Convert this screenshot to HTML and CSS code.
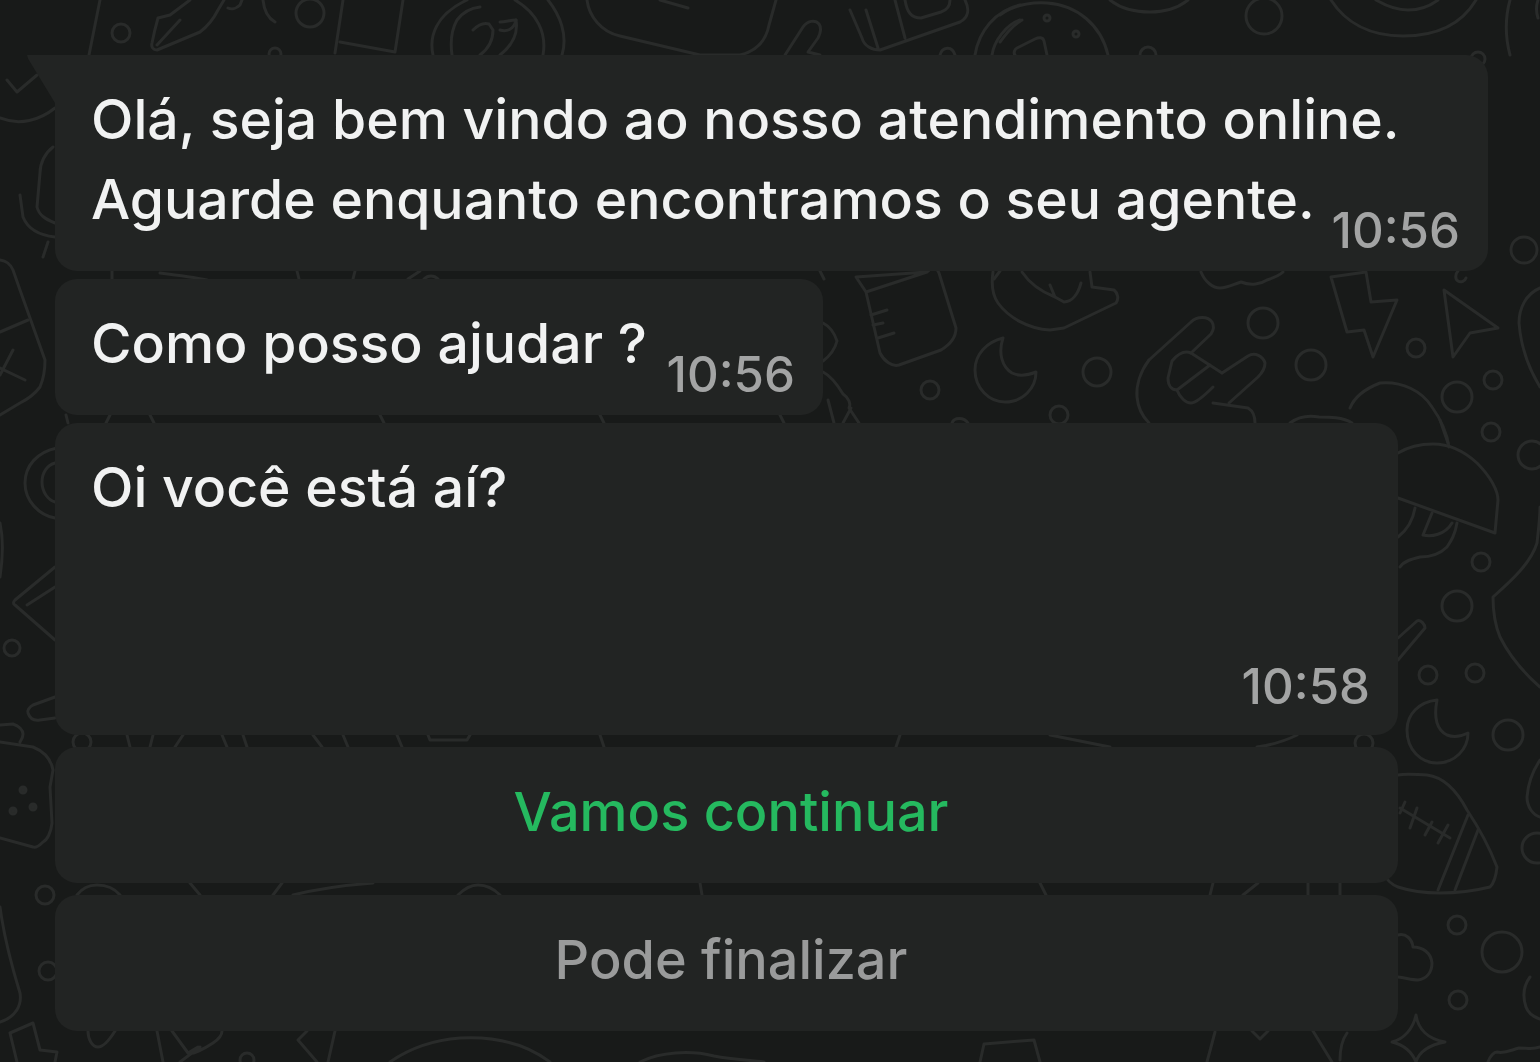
FILE: index.html
```html
<!DOCTYPE html>
<html lang="pt-BR">
<head>
    <meta charset="UTF-8">
    <title>Atendimento</title>
    <link rel="stylesheet" href="styles.css">
</head>
<body>
    <svg class="doodles" width="1540" height="1062" viewBox="0 0 1540 1062" fill="none">
        <!-- top row -->
        <circle cx="121" cy="33" r="9"/>
        <path d="M157 50c-4 0-6-3-5-7 2-10 4-18 6-25l12-3 20-15M157 50l43-18c8-6 14-14 18-22l6-10M157 45l23-25"/>
        <path d="M228 8c4 2 9 0 12-3l2-5M263 0c1 10 5 18 12 22"/>
        <circle cx="310" cy="13" r="14"/>
        <circle cx="275" cy="54" r="6"/>
        <path d="M100 0l-11 55M343 0l-8 53M340 42l55 10M403 0l-8 52"/>
        <path d="M433 55c-4-18 2-40 34-55M452 55c-2-14 0-26 5-35 6-8 14-12 23-13M480 55c8-6 13-14 13-25M493 30l-4-6c-6-2-12 2-16 6M500 30c6 2 14 0 16-10"/>
        <path d="M543 55c4-22-6-42-28-55M562 55c6-20-2-40-14-55"/>
        <path d="M500 22c6 0 10-2 16-2 2 12-2 24-16 35"/>
        <path d="M587 0c2 16 14 32 33 36l80 19h40c16-4 26-14 29-30l7-25M660 0l28 8"/>
        <path d="M785 55l18-28c4-6 12-8 16-3 3 4 1 10-1 14l-10 14 12 3"/>
        <path d="M850 10l12 28c2 8 10 12 18 12l80-28c8-4 10-12 5-22M866 10l12 38M895 0l10 38M905 0c2 12 6 18 16 18l20-6c6-2 9-6 9-12"/>
        <path d="M940 55c2-8 12-10 15 0"/>
        <path d="M975 55c4-24 20-44 45-50M992 55c2-14 14-30 28-35"/>
        <path d="M1000 15c14-10 30-13 47-12 30 2 54 22 61 52M1000 42c6-8 12-16 22-22"/>
        <circle cx="1047" cy="18" r="3"/>
        <circle cx="1076" cy="34" r="3"/>
        <path d="M1015 55c-2-2 0-6 2-7l18-9c4-2 8-2 9 2l3 14"/>
        <circle cx="1148" cy="55" r="8"/>
        <path d="M1110 0c10 8 24 12 40 12 16 0 28-4 38-12"/>
        <circle cx="1264" cy="16" r="18"/>
        <path d="M1331 0c14 22 38 36 72 36 36 0 60-14 73-36M1376 0c12 7 24 10 32 10 12 0 22-4 30-10"/>
        <path d="M1510 0c-5 18-5 36 0 55M1538 0c-2 6-2 12 0 18"/>
        <circle cx="1478" cy="59" r="7"/>

        <!-- left column -->
        <path d="M7 80l10 12 20-17M0 118c20 8 40 2 55-10"/>
        <path d="M53 147c-8 6-13 16-13 26l-3 34c2 8 8 12 18 16M20 195l3 22c4 10 14 18 32 20M48 242l-5 15"/>
        <path d="M0 260c6 1 10 3 13 10l7 20 25 70c0 12-2 20-5 27-6 8-12 12-20 16l-20 12"/>
        <path d="M0 332l28-12M13 350l-13 25M0 368l25 12"/>
        <path d="M57 448c-20 4-32 18-32 35 0 18 14 32 30 35M55 463c-8 2-13 10-13 19 0 10 6 18 13 20"/>
        <path d="M0 523c3 14 3 34 0 54"/>
        <path d="M55 567l-40 33c-2 2-2 4 0 5l40 35M27 605l28-18"/>
        <circle cx="12" cy="648" r="8"/>
        <path d="M55 697l-22 8c-4 2-6 6-5 8 2 6 6 8 12 7l15-2"/>
        <path d="M0 725l13-1c6 2 10 6 10 10 0 4-2 6-3 8M0 742l33 5c10 4 18 12 20 23l-3 17 2 36c-1 10-5 17-9 19-4 4-8 6-10 5l-33-9"/>
        <circle class="dot" cx="23" cy="790" r="3"/>
        <circle class="dot" cx="33" cy="807" r="3"/>
        <circle class="dot" cx="13" cy="811" r="3"/>
        <circle cx="45" cy="895" r="9"/>
        <circle cx="48" cy="971" r="9"/>
        <path d="M0 907c4 30 12 60 20 86 2 12-4 24-20 29"/>
        <path d="M10 1033l23-10 7 27 17 2-2 10M10 1033l7 29"/>

        <!-- bottom row -->
        <path d="M88 1031c0 8 4 16 10 16 6 0 12-8 17-16M157 1031l6 31M172 1031l16 22c4 2 16-4 25-10 6-4 9-8 9-12M200 1047l-20 15M188 1053l10-6"/>
        <path d="M307 1031l-9 9 19 22M335 1031l-7 31"/>
        <circle cx="247" cy="1060" r="7"/>
        <path d="M390 1062c20-14 44-22 70-24 36-2 66 6 90 24"/>
        <path d="M640 1062c20-10 50-12 74-6 20 4 36 4 50 6M980 1062l4-18 50-4 6 22"/>
        <path d="M1207 1062l8-30M1252 1031l8 8 8-8M1313 1031l19 31M1340 1060c0-12 2-20 7-27"/>
        <path d="M1416 1015c2 14 12 24 29 27-16 3-26 10-29 20-4-10-12-17-24-20 12-3 21-13 24-27z"/>
        <path d="M1488 1062c2-6 6-10 9-10 8 2 14-2 22-4 8 0 14 2 21-1M1530 977c-6 8-8 18-4 30 2 6 8 10 14 12"/>
        <circle cx="1458" cy="1000" r="9"/>

        <!-- between the bottle and the right edge -->
        <path d="M823 323c8 4 12 12 14 18-2 8-6 14-14 20M823 372c8 4 14 12 20 22 6 4 8 10 6 14l10 15M851 408l-8 15M828 400l6 23"/>
        <path d="M856 277l10 15 14 61c4 8 12 14 19 12l42-15c10-6 15-13 15-22l-17-55c-2-5-6-7-12-1l-61 20M856 277l71-5"/>
        <path d="M871 315l16-5M873 325l10-2M878 338l16-5"/>
        <path d="M993 272c-2 14 0 24 5 31 10 14 30 26 52 27l14-2 52-25c3-4 2-10-2-13l-22-3-2-15"/>
        <path d="M1022 272c8 12 20 20 33 25l9 5c8 0 14-8 17-19M1050 285l5 12"/>
        <path d="M1003 338c-16 4-28 16-28 32 0 18 14 32 30 32 18 0 31-14 31-30-10 4-18 4-24 1-10-6-14-20-9-35z"/>
        <circle cx="1097" cy="372" r="14"/>
        <circle cx="930" cy="390" r="9"/>
        <circle cx="1059" cy="415" r="9"/>
        <path d="M952 423c2-6 12-6 16 0"/>
        <!-- rock hand -->
        <path d="M1149 360L1191 322C1197 316 1208 316 1212 322C1215 327 1213 331 1211 334L1191 353"/>
        <path d="M1191 353C1184 350 1177 355 1172 361L1168 378C1168 386 1172 390 1177 390L1210 365M1191 353L1222 373"/>
        <path d="M1177 390C1180 398 1186 403 1191 403C1196 403 1203 397 1213 387"/>
        <path d="M1222 373L1248 356C1255 352 1263 356 1265 363C1265 368 1262 373 1258 377L1229 403"/>
        <path d="M1213 403L1248 408C1253 411 1255 416 1255 423M1149 360C1140 372 1136 386 1137 397C1138 408 1142 416 1149 423"/>
        <circle cx="1263" cy="323" r="15"/>
        <circle cx="1311" cy="365" r="15"/>
        <path d="M1201 272c4 10 12 16 19 16 8 0 14-4 21-6 10 4 20 2 26-2 6-2 12-4 16-8"/>
        <path d="M1331 277l35-5 5 30 26-2-24 57-9-27-17 2z"/>
        <path d="M1444 290l54 38-28 5-17 24z"/>
        <circle cx="1416" cy="348" r="9"/>
        <path d="M1458 271c-3 3-3 8 0 10 3 2 7 0 8-3"/>
        <circle cx="1524" cy="250" r="13"/>
        <path d="M1540 288c-14 6-21 20-21 35 2 26 10 46 21 64"/>
        <circle cx="1493" cy="380" r="9"/>
        <circle cx="1457" cy="397" r="15"/>
        <circle cx="1491" cy="432" r="9"/>
        <circle cx="1532" cy="455" r="14"/>
        <path d="M1290 423c8-6 18-8 29-6 10 0 24 0 33 6M1350 408c4-10 12-18 30-25 22-2 42 8 52 24 10 14 15 26 17 40"/>
        <!-- mushroom -->
        <path d="M1398 453c10-6 22-9 35-9 16 0 32 8 44 19 14 14 21 28 21 37l-3 33-97-35"/>
        <path d="M1415 508c-2 12-8 22-17 29M1432 513l-9 22c8 2 22 0 29-12M1457 523c-2 12-6 18-10 24-6 6-16 10-27 10-8 2-16 4-20 10M1440 420l8 23"/>
        <circle cx="1481" cy="562" r="9"/>
        <circle cx="1457" cy="606" r="15"/>
        <path d="M1540 507c0 12-2 26-3 36-6 20-26 38-44 54 0 14 2 28 7 40 10 20 24 36 40 50"/>
        <path d="M1398 638l19-17c4-2 8 4 8 7l-27 32"/>
        <circle cx="1428" cy="675" r="9"/>
        <circle cx="1475" cy="673" r="9"/>
        <path d="M1437 700c-18 2-30 14-30 30 0 20 14 33 30 33 18 0 31-14 31-30-8 4-16 4-21 2-8-4-14-14-10-35z"/>
        <circle cx="1508" cy="735" r="15"/>
        <!-- football -->
        <path d="M1398 775c10-2 20 0 29 0 16 2 30 16 40 35 12 18 22 36 30 57-1 10-4 17-7 20-16 4-34 6-50 6-14 0-30-2-42-6-6-2-12-8-15-14"/>
        <path d="M1468 815l-30 75M1478 830l-23 60M1400 808l50 30M1405 802l-5 11M1417 808l-7 20M1432 822l-7 13M1448 825l-10 18"/>
        <path d="M1540 760c-8 12-12 24-13 37 0 10 6 18 13 20"/>
        <circle cx="1537" cy="848" r="15"/>
        <circle cx="1457" cy="925" r="9"/>
        <circle cx="1502" cy="952" r="20"/>
        <path d="M1398 935c8-2 14 4 15 12 10 0 18 6 19 16 0 10-6 16-14 17-6 0-12-2-20-3"/>

        <!-- lines seen through the gaps -->
        <path d="M112 271v8M160 273c16 2 32 4 47 7M297 271l2 8M355 271l-2 8M408 279l12-8M424 279c4-4 10-4 14 0"/>
        <path d="M820 271l4 8M1000 271l-6 8M66 415l2 8M110 415l-4 8M150 415l4 8M380 415l4 8M600 415l4 8M780 415l4 8"/>
        <circle cx="82" cy="742" r="9"/>
        <path d="M127 735l3 12M153 735l-3 12M183 735l-8 12M222 735l5 12M243 735l4 12M313 735l9 12M343 735l5 12M397 735l5 12M428 735l2 5h37l3-5"/>
        <path d="M600 735l4 12M900 735l-4 12M1050 735l60 12M1257 747c14-2 28-6 40-12"/>
        <circle cx="1364" cy="743" r="9"/>
        <path d="M77 895c6-8 14-10 20-10 10 0 18 4 23 10M190 883l10 12M282 883l-9 12M293 895c24-6 54-10 80-12M458 895c6-6 14-10 20-10 10 0 16 4 22 10"/>
        <path d="M700 883l2 12M1040 883l6 12M1213 883l-3 12M1258 883l-15 12M1308 883v12M1340 883v12"/>
    </svg>

    <div class="chat">
        <div class="bubble bubble-first">
            <p class="msg">Olá, seja bem vindo ao nosso atendimento online.<br>Aguarde enquanto encontramos o seu agente.</p>
            <span class="time">10:56</span>
        </div>
        <div class="bubble bubble-short">
            <p class="msg">Como posso ajudar ?</p>
            <span class="time">10:56</span>
        </div>
        <div class="bubble bubble-tall">
            <p class="msg">Oi você está aí?</p>
            <span class="time time-low">10:58</span>
        </div>
        <div class="options">
            <div class="option option-on">Vamos continuar</div>
            <div class="option">Pode finalizar</div>
        </div>
    </div>
</body>
</html>
```

FILE: styles.css
```css
*{
    padding: 0;
    margin: 0;
    box-sizing: border-box;
}
html,body{
    height: 100%;
    overflow: hidden;
}
body{
    background-color: #181a19;
    font-family: Inter, "Liberation Sans", sans-serif;
    font-weight: 450;
    color: #f1f2f2;
}
.doodles{
    position: absolute;
    top: 0;
    left: 0;
    stroke: #292b2a;
    stroke-width: 3;
    stroke-linecap: round;
    stroke-linejoin: round;
    filter: blur(0.6px);
}
.doodles .dot{
    fill: #292b2a;
}
.chat{
    position: relative;
    display: flex;
    flex-direction: column;
    align-items: flex-start;
    gap: 8px;
    padding: 55px 0 0 55px;
}
.bubble{
    position: relative;
    display: flex;
    background-color: #222423;
    border-radius: 22px;
}
.bubble-first{
    width: 1433px;
    height: 216px;
    padding: 24px 28px 0 36px;
    border-top-left-radius: 0;
}
/* the tail on the first message */
.bubble-first::before{
    content: '';
    position: absolute;
    top: 0;
    left: -28px;
    width: 28px;
    height: 48px;
    background-color: #222423;
    clip-path: polygon(0 0, 100% 0, 100% 100%, 4% 8%);
}
.bubble-short{
    width: 768px;
    height: 136px;
    padding: 24px 28px 0 36px;
}
.bubble-tall{
    width: 1343px;
    height: 312px;
    padding: 24px 28px 0 36px;
}
.msg{
    font-size: 55.3px;
    line-height: 80px;
    flex: 1;
    min-width: 0;
    white-space: nowrap;
}
.time{
    flex-shrink: 0;
    align-self: flex-end;
    font-size: 49.2px;
    line-height: 56px;
    color: #a3a4a4;
    padding-bottom: 13px;
}
.time-low{
    padding-bottom: 21px;
}
.options{
    display: flex;
    flex-direction: column;
    gap: 12px;
    margin-top: 4px;
}
.option{
    width: 1343px;
    height: 136px;
    display: flex;
    align-items: center;
    justify-content: center;
    padding: 0 0 8px 9px;
    background-color: #222423;
    border-radius: 22px;
    font-size: 54px;
    color: #9a9b9b;
}
.option-on{
    color: #25b95f;
}
```
